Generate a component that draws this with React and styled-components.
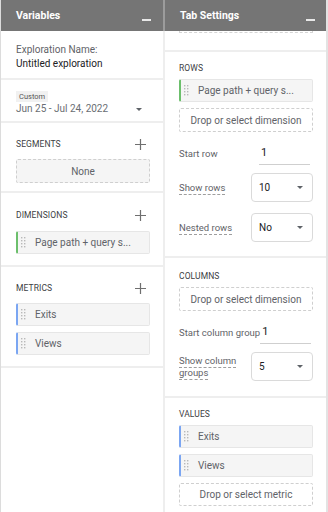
import styled, { createGlobalStyle } from "styled-components";

const Global = createGlobalStyle`
  body {
    margin: 0;
    background: #fff;
    font-family: Roboto, "Liberation Sans", Arial, sans-serif;
  }
`;

const Frame = styled.div`
  display: flex;
  gap: 2px;
  height: 512px;
  box-sizing: border-box;
  border-left: 1px solid #dcdcdc;
  border-right: 2px solid #e3e3e3;
  background: linear-gradient(#9c9c9c 0 31px, #eeeeee 31px);
  overflow: hidden;
`;

const Panel = styled.div`
  width: ${(p) => p.width}px;
  display: flex;
  flex-direction: column;
  background: #fff;
`;

const Header = styled.div`
  height: 31px;
  flex-shrink: 0;
  background: #757575;
  display: flex;
  justify-content: space-between;
  align-items: center;
  padding: 0 ${(p) => p.right}px 0 15px;
`;

const HeaderTitle = styled.span`
  color: #fff;
  font-weight: 700;
  font-size: 10.5px;
  margin-top: -1px;
`;

const Collapse = styled.span`
  width: 9px;
  height: 2px;
  background: #e8e8e8;
  align-self: flex-end;
  margin-bottom: 10px;
`;

const Section = styled.div`
  padding: ${(p) => p.pad};
  border-bottom: 2px solid #eeeeee;
  display: flex;
  flex-direction: column;
  flex-shrink: 0;
`;

const Label = styled.div`
  font-size: 10px;
  line-height: 14px;
  color: ${(p) => (p.dark ? "#202124" : "#5f6368")};
`;

const Tag = styled.span`
  align-self: flex-start;
  font-size: 7.5px;
  line-height: 11px;
  padding: 0 3px;
  background: #f1f1f1;
  color: #555;
`;

const DateRow = styled.div`
  display: flex;
  justify-content: space-between;
  align-items: center;
  padding-right: 8px;
  font-size: 10px;
  line-height: 14px;
  color: #6a6e73;
`;

const Caret = styled.span`
  width: 0;
  height: 0;
  border-left: 3px solid transparent;
  border-right: 3px solid transparent;
  border-top: 3px solid #5f6368;
`;

const TitleRow = styled.div`
  display: flex;
  justify-content: space-between;
  align-items: center;
  height: 14px;
  padding-right: 4px;
`;

const Title = styled.span`
  font-size: 8.5px;
  color: #3c4043;
  letter-spacing: 0.1px;
`;

const Box = styled.div`
  height: ${(p) => p.h || 23}px;
  margin-top: ${(p) => p.mt || 0}px;
  box-sizing: border-box;
  border: 1px dashed #cfcfcf;
  border-radius: 2px;
  background: ${(p) => (p.filled ? "#f5f5f5" : "#fff")};
  display: flex;
  align-items: center;
  justify-content: center;
  font-size: 10px;
  color: #5f6368;
`;

const Stub = styled.div`
  height: 1px;
  border: 1px dashed #d5d5d5;
  border-top: none;
`;

const Chip = styled.div`
  height: 23px;
  margin-top: ${(p) => p.mt || 0}px;
  box-sizing: border-box;
  background: #f5f5f5;
  border: 1px solid #e6e6e6;
  border-left: 2px solid ${(p) => (p.kind === "dim" ? "#6cbf6c" : "#7ba6f2")};
  border-radius: 2px;
  display: flex;
  align-items: center;
  gap: 9px;
  padding-left: 3px;
  font-size: 10px;
  color: #5f6368;
`;

const FieldRow = styled.div`
  display: flex;
  justify-content: space-between;
  align-items: center;
  height: ${(p) => p.h}px;
  margin-top: ${(p) => p.mt}px;
`;

const FieldLabel = styled.span`
  font-size: 9.5px;
  line-height: 12px;
  color: #5f6368;
  white-space: nowrap;
  ${(p) =>
    p.hint &&
    `
    text-decoration: underline dashed #9e9e9e;
    text-underline-offset: 3px;
    text-decoration-thickness: 1px;
  `}
`;

const NumberInput = styled.div`
  width: 51px;
  height: 22px;
  flex-shrink: 0;
  margin-right: 3px;
  box-sizing: border-box;
  border-bottom: 1px solid #cfcfcf;
  padding: 3px 0 0 2px;
  font-size: 11px;
  color: #202124;
`;

const Select = styled.div`
  width: 62px;
  height: 29px;
  flex-shrink: 0;
  box-sizing: border-box;
  border: 1px solid #dadada;
  border-radius: 4px;
  display: flex;
  justify-content: space-between;
  align-items: center;
  padding: 0 9px 0 7px;
  font-size: 10px;
  color: #202124;
`;

const Stack = styled.div`
  display: flex;
  flex-direction: column;
`;

function Plus() {
  return (
    <svg width="11" height="11" viewBox="0 0 11 11">
      <path d="M5.5 0v11M0 5.5h11" stroke="#6f6f6f" strokeWidth="1.2" />
    </svg>
  );
}

function Grip() {
  const dots = [];
  for (let r = 0; r < 4; r++)
    for (let c = 0; c < 2; c++)
      dots.push(<rect key={`${r}${c}`} x={c * 3} y={r * 3} width="1.4" height="1.4" fill="#b9b9b9" />);
  return (
    <svg width="5" height="11" viewBox="0 0 5 11">
      {dots}
    </svg>
  );
}

function ItemChip({ kind, text, mt }) {
  return (
    <Chip kind={kind} mt={mt}>
      <Grip />
      <span>{text}</span>
    </Chip>
  );
}

function Variables() {
  return (
    <Panel width={162}>
      <Header right={12}>
        <HeaderTitle>Variables</HeaderTitle>
        <Collapse />
      </Header>
      <Section pad="12px 13px 7px 15px">
        <Label>Exploration Name:</Label>
        <Label dark>Untitled exploration</Label>
      </Section>
      <Section pad="11px 13px 5px 15px">
        <Tag>Custom</Tag>
        <DateRow>
          <span>Jun 25 - Jul 24, 2022</span>
          <Caret />
        </DateRow>
      </Section>
      <Section pad="14px 13px 8px 15px">
        <TitleRow>
          <Title>SEGMENTS</Title>
          <Plus />
        </TitleRow>
        <Box filled h={24} mt={8}>None</Box>
      </Section>
      <Section pad="15px 13px 11px 15px">
        <TitleRow>
          <Title>DIMENSIONS</Title>
          <Plus />
        </TitleRow>
        <ItemChip kind="dim" text="Page path + query s..." mt={9} />
      </Section>
      <Section pad="14px 13px 11px 15px">
        <TitleRow>
          <Title>METRICS</Title>
          <Plus />
        </TitleRow>
        <ItemChip kind="met" text="Exits" mt={8} />
        <ItemChip kind="met" text="Views" mt={6} />
      </Section>
    </Panel>
  );
}

function TabSettings() {
  return (
    <Panel width={161}>
      <Header right={11}>
        <HeaderTitle>Tab Settings</HeaderTitle>
        <Collapse />
      </Header>
      <Section pad="0 13px 17px 14px">
        <Stub />
      </Section>
      <Section pad="9px 13px 14px 14px">
        <TitleRow>
          <Title>ROWS</Title>
        </TitleRow>
        <ItemChip kind="dim" text="Page path + query s..." mt={4} />
        <Box h={24} mt={6}>Drop or select dimension</Box>
        <FieldRow h={22} mt={11}>
          <FieldLabel>Start row</FieldLabel>
          <NumberInput>1</NumberInput>
        </FieldRow>
        <FieldRow h={29} mt={8}>
          <FieldLabel hint>Show rows</FieldLabel>
          <Select>
            <span>10</span>
            <Caret />
          </Select>
        </FieldRow>
        <FieldRow h={29} mt={11}>
          <FieldLabel hint>Nested rows</FieldLabel>
          <Select>
            <span>No</span>
            <Caret />
          </Select>
        </FieldRow>
      </Section>
      <Section pad="11px 13px 15px 14px">
        <TitleRow>
          <Title>COLUMNS</Title>
        </TitleRow>
        <Box h={24} mt={4}>Drop or select dimension</Box>
        <FieldRow h={22} mt={11}>
          <FieldLabel>Start column group</FieldLabel>
          <NumberInput>1</NumberInput>
        </FieldRow>
        <FieldRow h={29} mt={8}>
          <Stack>
            <FieldLabel hint>Show column</FieldLabel>
            <FieldLabel hint>groups</FieldLabel>
          </Stack>
          <Select>
            <span>5</span>
            <Caret />
          </Select>
        </FieldRow>
      </Section>
      <Section pad="9px 13px 10px 14px">
        <TitleRow>
          <Title>VALUES</Title>
        </TitleRow>
        <ItemChip kind="met" text="Exits" mt={4} />
        <ItemChip kind="met" text="Views" mt={6} />
        <Box h={23} mt={6}>Drop or select metric</Box>
      </Section>
    </Panel>
  );
}

export default function App() {
  return (
    <>
      <Global />
      <Frame>
        <Variables />
        <TabSettings />
      </Frame>
    </>
  );
}
